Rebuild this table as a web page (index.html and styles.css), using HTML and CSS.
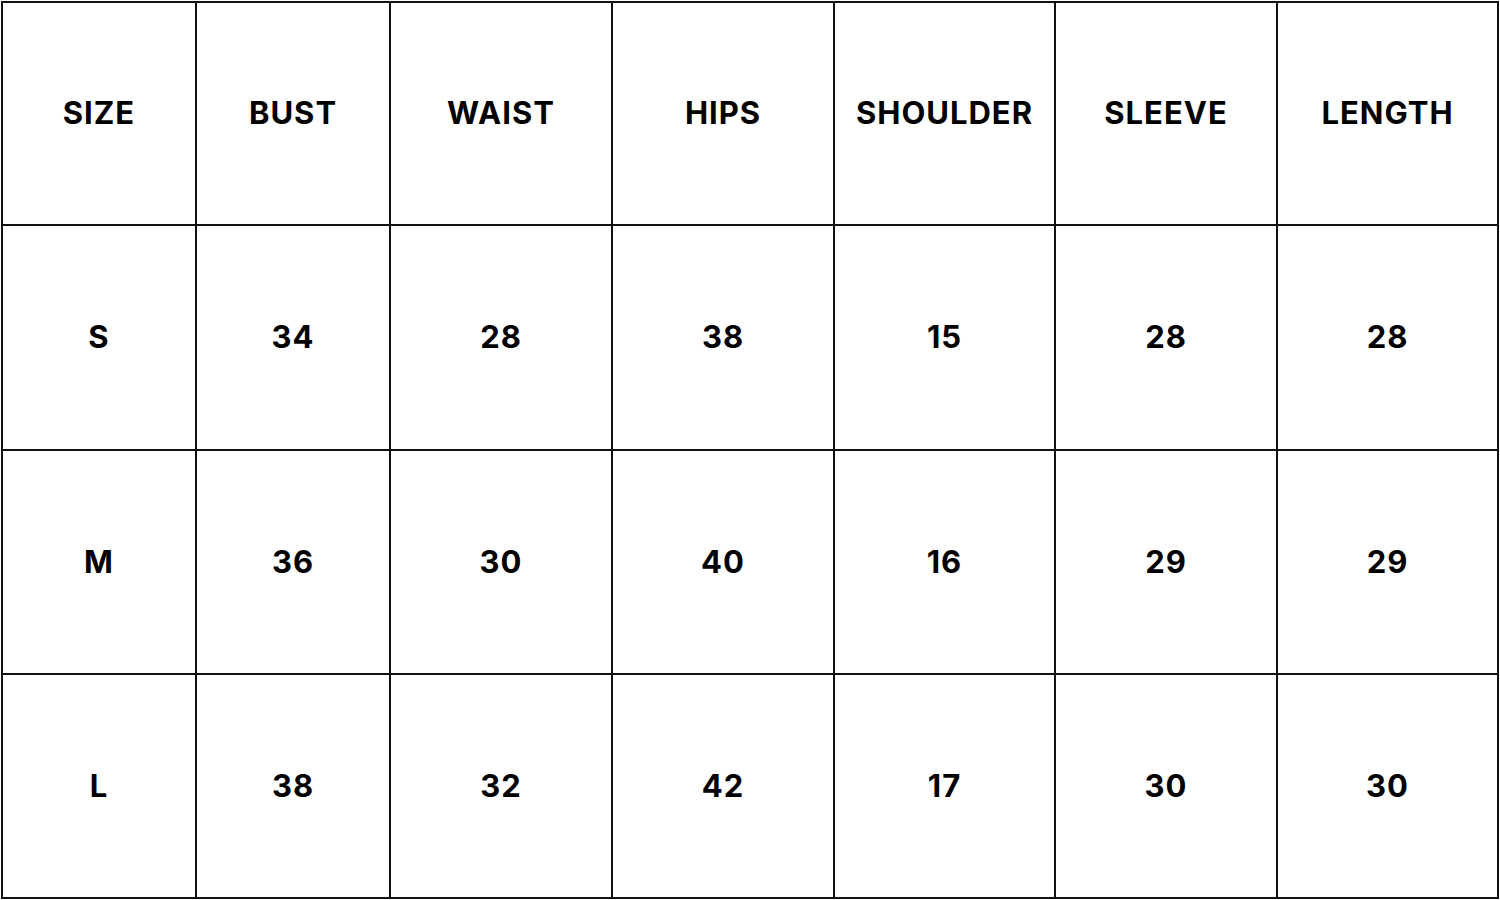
FILE: index.html
```html
<!DOCTYPE html>
<html>
<head>
<meta charset="utf-8">
<link rel="stylesheet" href="styles.css">
</head>
<body>
<div class="chart">
  <div class="cell">SIZE</div><div class="cell">BUST</div><div class="cell">WAIST</div><div class="cell">HIPS</div><div class="cell">SHOULDER</div><div class="cell">SLEEVE</div><div class="cell">LENGTH</div>
  <div class="cell">S</div><div class="cell">34</div><div class="cell">28</div><div class="cell">38</div><div class="cell">15</div><div class="cell">28</div><div class="cell">28</div>
  <div class="cell">M</div><div class="cell">36</div><div class="cell">30</div><div class="cell">40</div><div class="cell">16</div><div class="cell">29</div><div class="cell">29</div>
  <div class="cell">L</div><div class="cell">38</div><div class="cell">32</div><div class="cell">42</div><div class="cell">17</div><div class="cell">30</div><div class="cell">30</div>
</div>
</body>
</html>
```
FILE: styles.css
```css
html, body {
  margin: 0;
  background: #ffffff;
}
body {
  padding: 1px 0 0 1px;
}
.chart {
  width: 1498px;
  height: 898px;
  box-sizing: border-box;
  background: #111111;
  padding: 2px;
  display: grid;
  gap: 2px;
  grid-template-columns: 192px 192px 220px 220px 219px 220px 219px;
  grid-template-rows: 221px 223px 222px 222px;
}
.cell {
  background: #ffffff;
  display: flex;
  align-items: center;
  justify-content: center;
  padding-bottom: 2px;
  font-family: "Inter", sans-serif;
  font-weight: 700;
  font-size: 31px;
  letter-spacing: 1px;
  color: #000000;
}
```
